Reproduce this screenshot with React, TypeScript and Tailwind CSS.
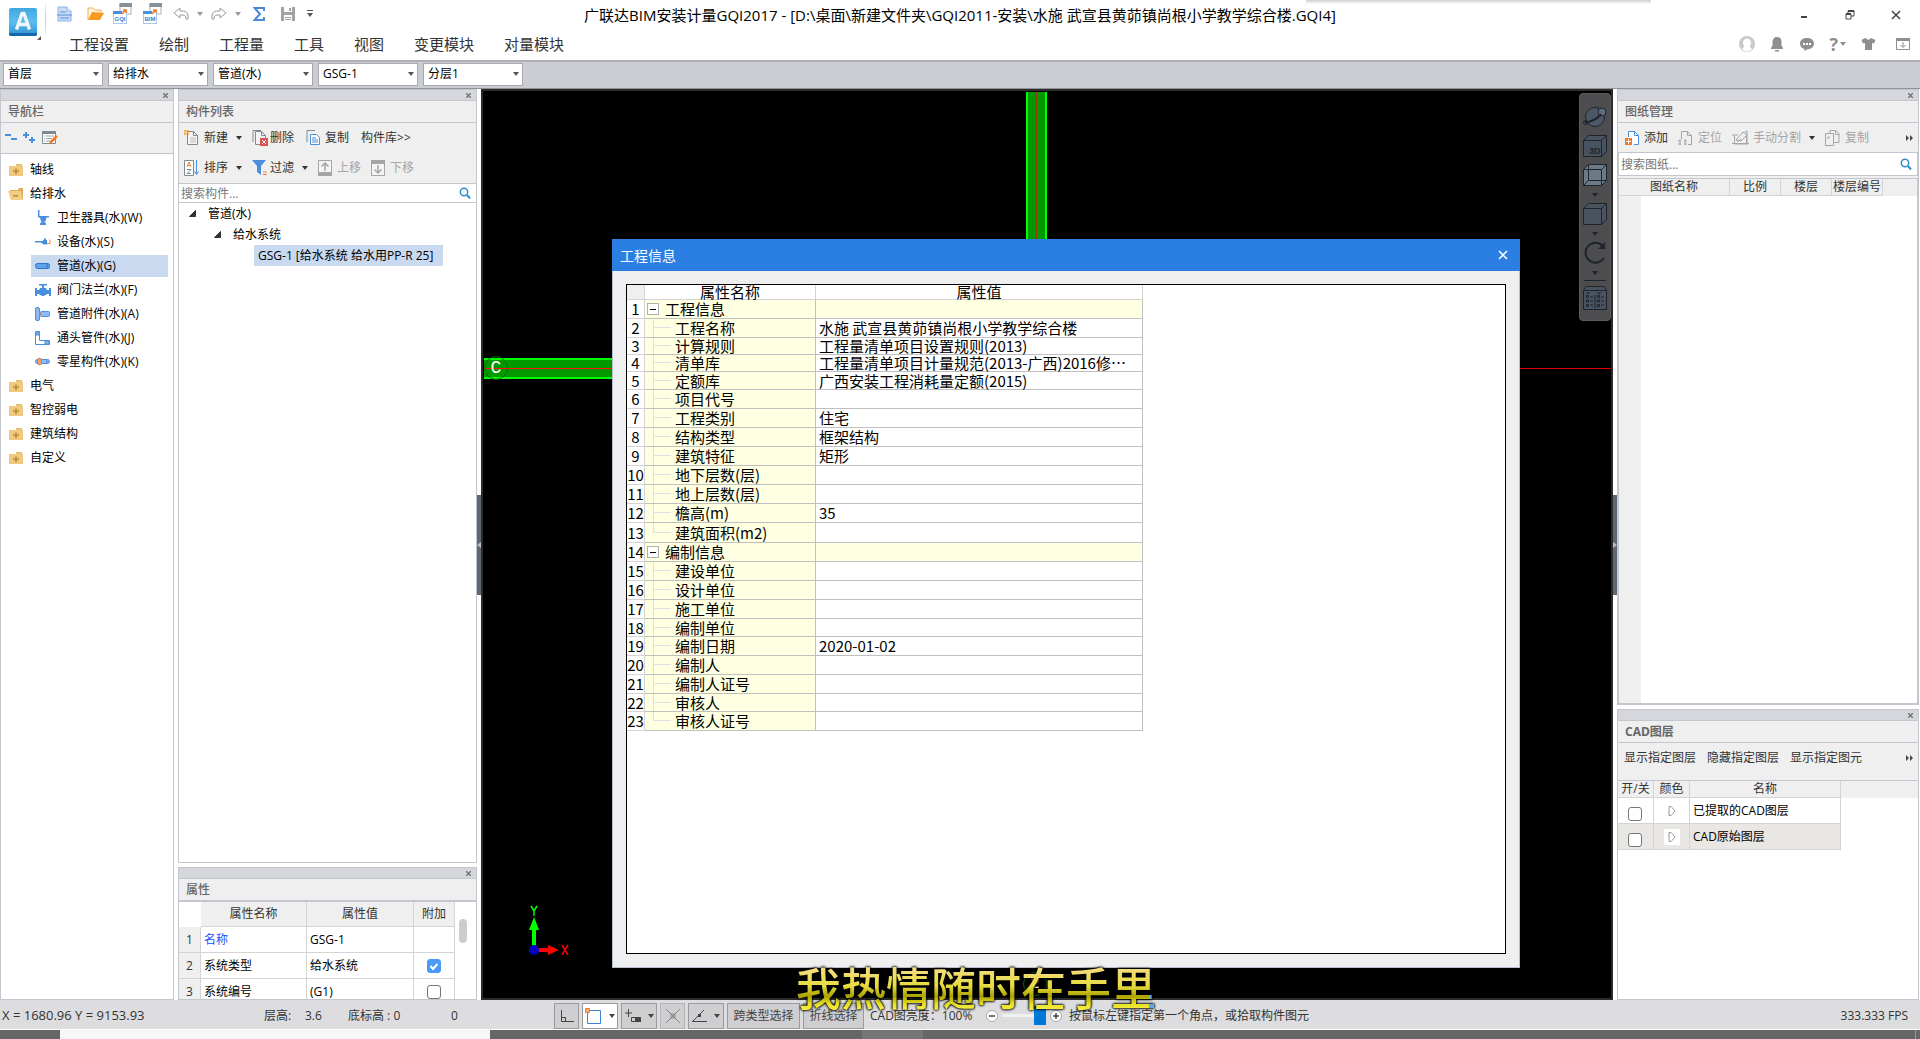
import { useState, type ReactNode } from "react";
import clsx from "clsx";

const menus = ["工程设置", "绘制", "工程量", "工具", "视图", "变更模块", "对量模块"];

const combos = [
  { label: "楼层", value: "首层" },
  { label: "专业", value: "给排水" },
  { label: "构件类型", value: "管道(水)" },
  { label: "构件", value: "GSG-1" },
  { label: "分层", value: "分层1" },
];

const navChildren = [
  { name: "卫生器具(水)(W)", icon: "toilet" },
  { name: "设备(水)(S)", icon: "tap" },
  { name: "管道(水)(G)", icon: "pipe" },
  { name: "阀门法兰(水)(F)", icon: "valve" },
  { name: "管道附件(水)(A)", icon: "fitting" },
  { name: "通头管件(水)(J)", icon: "elbow" },
  { name: "零星构件(水)(K)", icon: "misc" },
];

interface InfoRow {
  name: string;
  value?: string;
  group?: boolean;
  last?: boolean;
  height?: string;
}

const infoRows: InfoRow[] = [
  { name: "工程信息", group: true },
  { name: "工程名称", value: "水施 武宣县黄茆镇尚根小学教学综合楼" },
  { name: "计算规则", value: "工程量清单项目设置规则(2013)", height: "h-[17px]" },
  { name: "清单库", value: "工程量清单项目计量规范(2013-广西)2016修…", height: "h-[17px]" },
  { name: "定额库", value: "广西安装工程消耗量定额(2015)", height: "h-[18px]" },
  { name: "项目代号" },
  { name: "工程类别", value: "住宅" },
  { name: "结构类型", value: "框架结构" },
  { name: "建筑特征", value: "矩形" },
  { name: "地下层数(层)" },
  { name: "地上层数(层)" },
  { name: "檐高(m)", value: "35" },
  { name: "建筑面积(m2)", last: true, height: "h-5" },
  { name: "编制信息", group: true },
  { name: "建设单位" },
  { name: "设计单位" },
  { name: "施工单位" },
  { name: "编制单位", height: "h-[18px]" },
  { name: "编制日期", value: "2020-01-02" },
  { name: "编制人" },
  { name: "编制人证号" },
  { name: "审核人", height: "h-[18px]" },
  { name: "审核人证号", last: true },
];

function Caret({ className }: { className?: string }) {
  return (
    <svg width="6" height="4" viewBox="0 0 6 4" className={clsx("shrink-0", className)}>
      <path d="M0 0h6L3 4z" fill="currentColor" />
    </svg>
  );
}

function Svg({ w = 16, h = 16, children, className }: { w?: number; h?: number; children: ReactNode; className?: string }) {
  return (
    <svg width={w} height={h} viewBox={`0 0 ${w} ${h}`} fill="none" className={clsx("shrink-0", className)}>
      {children}
    </svg>
  );
}

function Logo() {
  return (
    <Svg w={32} h={32}>
      <defs>
        <linearGradient id="logo" x1="0" y1="0" x2="0" y2="1">
          <stop offset="0" stopColor="#3fa9e0" />
          <stop offset="0.5" stopColor="#5dbdf0" />
          <stop offset="1" stopColor="#2d8fd0" />
        </linearGradient>
      </defs>
      <rect width="28" height="28" rx="2" fill="url(#logo)" />
      <path d="M0 25h28v1a2 2 0 0 1-2 2H2a2 2 0 0 1-2-2z" fill="#1168ac" />
      <path d="M7.500 21.500 13 5.500h2L20.500 21.500M9.500 16.500h9" stroke="#f1f5f8" strokeWidth="3.400" strokeLinejoin="round" />
      <path d="M32 28v4h-4z" fill="#555" />
    </Svg>
  );
}

function WindowsIcon({ label }: { label: string }) {
  return (
    <Svg w={20} h={22}>
      <rect x="7" y="1" width="11" height="10" fill="#fff" stroke="#a9b0b6" />
      <path d="M6.500 0H19v4H6.500z" fill="#86929b" />
      <rect x="0.500" y="8.500" width="13" height="12" fill="#fff" stroke="#a8c8ee" />
      <path d="M0 8h9v3H0z" fill="#4a90e2" />
      <path d="m9 11 4-4M10 7h3v3" stroke="#f47b20" strokeWidth="1.500" />
      <text x="7" y="18" textAnchor="middle" fontSize="6" fontWeight="700" fill="#3d7fd0" fontFamily="Liberation Sans, sans-serif">
        {label}
      </text>
    </Svg>
  );
}

function QuickAccess() {
  return (
    <div className="flex h-7 items-center text-[#9a9a9a]">
      <button aria-label="新建工程">
        <Svg w={16} h={16}>
          <path d="M1 1h9l4 4v10H1z" fill="#c9dbf5" stroke="#8eb2e6" />
          <path d="M10 1v4h4" fill="#fff" stroke="#8eb2e6" />
          <path d="M0 9h15M3 6h6M3 12h9" stroke="#5a8fd8" />
        </Svg>
      </button>
      <button aria-label="打开" className="ml-3.5">
        <Svg w={18} h={16}>
          <path d="M1 14V2h5l2 2h6v3" stroke="#f0b055" fill="#fff3df" />
          <path d="m1 14 4-8 12 1-4 7z" fill="#f59a23" />
        </Svg>
      </button>
      <button aria-label="导入GQI" className="ml-2">
        <WindowsIcon label="GQI" />
      </button>
      <button aria-label="导入BIM" className="ml-2.5">
        <WindowsIcon label="BIM" />
      </button>
      <button aria-label="撤销" className="ml-2.5 flex items-center gap-2">
        <Svg w={16} h={14}>
          <path d="M1 6 7 1v3h3c3 0 5 2 5 5v3h-2c0-3-1-4-3-4H7v3z" stroke="#9a9a9a" />
        </Svg>
        <Caret />
      </button>
      <button aria-label="恢复" className="ml-2 flex items-center gap-2">
        <Svg w={16} h={14}>
          <path d="M15 6 9 1v3H6C3 4 1 6 1 9v3h2c0-3 1-4 3-4h3v3z" stroke="#9a9a9a" />
        </Svg>
        <Caret />
      </button>
      <button aria-label="汇总计算" className="ml-3">
        <Svg w={12} h={14}>
          <path d="M11 4V1H1.500L7 7l-5.500 6H11v-3" stroke="#4a8ad4" strokeWidth="2" />
        </Svg>
      </button>
      <button aria-label="保存" className="ml-4">
        <Svg w={14} h={14}>
          <path d="M0 0h14v14H0z" fill="#a2a2a2" />
          <path d="M3 0h8v5H3zM3 8h8v6H3z" fill="#fff" />
          <path d="M8 1h2v3H8zM4 10h6v1H4zM4 12h6v1H4z" fill="#a2a2a2" />
        </Svg>
      </button>
      <button aria-label="更多" className="ml-3 flex flex-col items-center gap-0.5 text-[#555]">
        <span className="h-px w-1.5 bg-[#555]" />
        <Caret />
      </button>
    </div>
  );
}

function Header() {
  return (
    <header className="relative flex h-[60px] shrink-0 bg-white">
      <div className="absolute top-0 left-[68%] right-[14%] h-1 bg-gradient-to-b from-[#cfcfcf] to-white" />
      <button aria-label="主菜单" className="mt-2 ml-[9px] h-8">
        <Logo />
      </button>
      <div className="ml-1 h-10 w-px bg-gradient-to-b from-white via-[#c8c8c8] to-white" />
      <div className="ml-[11px] flex flex-col">
        <QuickAccess />
        <nav className="mt-px ml-3 flex h-8 items-center gap-[30px] text-[15px] text-[#333]">
          {menus.map((name) => (
            <button key={name}>{name}</button>
          ))}
        </nav>
      </div>
      <h1 className="pointer-events-none absolute inset-x-0 top-[3px] text-center text-[15px] leading-6 whitespace-nowrap text-black">
        广联达BIM安装计量GQI2017 - [D:\桌面\新建文件夹\GQI2011-安装\水施 武宣县黄茆镇尚根小学教学综合楼.GQI4]
      </h1>
      <div className="ml-auto flex flex-col items-end">
        <div className="flex h-[30px] items-center gap-9 pr-[19px] text-[#444]">
          <button aria-label="最小化"><Svg w={10} h={10}><path d="M2 7h6" stroke="currentColor" strokeWidth="2" /></Svg></button>
          <button aria-label="还原">
            <Svg w={10} h={10}>
              <path d="M1 4h5v5H1zM3 4V1h6v5H6" stroke="currentColor" />
              <path d="M1 4h5M3 1h6" stroke="currentColor" strokeWidth="2" />
            </Svg>
          </button>
          <button aria-label="关闭"><Svg w={10} h={10}><path d="m1 1 8 8M9 1 1 9" stroke="currentColor" strokeWidth="1.500" /></Svg></button>
        </div>
        <div className="flex h-7 items-center gap-3.5 pr-2.5 text-[#8f8f8f]">
          <button aria-label="用户">
            <Svg>
              <circle cx="8" cy="8" r="8" fill="#c9c9c9" />
              <path d="M8 2.500c-2.500 0-4 1.800-4 4 0 1.800.6 3 1.500 3.800L3 13c1.500 1.500 3 2.500 5 2.500s3.500-1 5-2.500l-2.500-2.700C11.400 9.500 12 8.300 12 6.500c0-2.200-1.500-4-4-4z" fill="#fff" />
            </Svg>
          </button>
          <button aria-label="通知">
            <Svg>
              <path d="M8 1c3 0 4.500 2 4.500 5v3.500L14 12v1H2v-1l1.500-2.500V6C3.500 3 5 1 8 1zM6 14h4v1.500H6z" fill="currentColor" />
            </Svg>
          </button>
          <button aria-label="消息">
            <Svg>
              <path d="M8 2c4 0 7 2 7 5.500S12 13 9 13l-3.500 2v-2C3 12.500 1 10.500 1 7.500 1 4 4 2 8 2z" fill="currentColor" />
              <path d="M4 7h2v2H4zM7 7h2v2H7zM10 7h2v2h-2z" fill="#fff" />
            </Svg>
          </button>
          <button aria-label="帮助" className="flex items-center gap-0.5 text-lg font-bold">
            ?<Caret />
          </button>
          <button aria-label="皮肤">
            <Svg><path d="M5 2 1.500 4 3 7.500l2-.5v7h7V7l2 .5L15.500 4 11 2 8.500 4z" fill="currentColor" /></Svg>
          </button>
          <button aria-label="收起功能区" className="ml-1.5">
            <Svg w={14} h={14}>
              <path d="M.5 1.500h13v11H.5z" stroke="currentColor" />
              <path d="M0 1h14v3H0z" fill="currentColor" />
              <path d="M7 5v5M4.500 8 7 10.500 9.500 8" stroke="currentColor" />
            </Svg>
          </button>
        </div>
      </div>
    </header>
  );
}

function Combo({ label, value }: { label: string; value: string }) {
  return (
    <label className="relative block h-[23px] w-[100px]">
      <select
        aria-label={label}
        className="block h-full w-full appearance-none border border-[#a9a9ad] bg-white pb-0.5 pl-1 text-[12px] leading-[18px] text-black"
      >
        <option>{value}</option>
      </select>
      <Caret className="pointer-events-none absolute top-[9px] right-1 text-[#555]" />
    </label>
  );
}

function PanelHead({ title, bold }: { title: string; bold?: boolean }) {
  return (
    <>
      <div className="flex h-[11px] shrink-0 items-center justify-end border-b border-[#c3c6cd] bg-[#d5d7dc] pr-[5px]">
        <button aria-label={`关闭${title}`} className="text-[#777]">
          <Svg w={5} h={5}><path d="m0 0 5 5M5 0 0 5" stroke="currentColor" strokeWidth="1.500" /></Svg>
        </button>
      </div>
      <h2 className={clsx("h-[22px] shrink-0 border-b border-[#c3c6cd] bg-[#efefef] pl-[7px] text-[12px] leading-[21px] text-[#666]", bold ? "font-bold" : "font-medium")}>
        {title}
      </h2>
    </>
  );
}

function Folder({ open }: { open?: boolean }) {
  return (
    <Svg w={16} h={14}>
      {open ? (
        <>
          <path d="M2 3h8l1-2h4v12H3z" fill="#dcae55" />
          <path d="M0 4h13l2 9H3z" fill="#f2cd85" />
          <path d="M5 8h5v1.500H5z" fill="#b98a2e" />
        </>
      ) : (
        <>
          <path d="M8 1h6v2H8z" fill="#e4be74" />
          <path d="M1 3h14v10H1z" fill="#efc981" />
          <path d="M7.200 5.500h1.600v2h2v1.600h-2v2H7.200v-2h-2V7.500h2z" fill="#b98a2e" />
        </>
      )}
    </Svg>
  );
}

function NavIcon({ name }: { name: string }) {
  return (
    <Svg>
      {name === "toilet" && (
        <path d="M3 0h1.500v6H14v1.500h-2.500l-1 4H9l2 2V15H5v-1.500l2-2H6L5 7.500H3z" fill="#4a8ede" />
      )}
      {name === "tap" && (
        <>
          <path d="M0 7h8V6h1V4.500h2V6h1v4.500H8.500L6 8.500H0z" fill="#4a8ede" />
          <path d="M12 9.500h3V5.500" stroke="#ee8240" />
        </>
      )}
      {name === "pipe" && (
        <>
          <rect x="0.500" y="5.500" width="14" height="5" rx="2" fill="#5ba3ec" stroke="#2f74c8" />
          <path d="M12 6v4" stroke="#2f74c8" />
        </>
      )}
      {name === "valve" && (
        <path d="M4 2h8v1.500H9V6h2l1 2h2V6h2v8h-2v-2h-2l-1 1h-1l-1 1H7l-1-1H5l-1-1H2v2H0V6h2v2h2l1-2h2V3.500H4z" fill="#4a8ede" />
      )}
      {name === "fitting" && (
        <>
          <rect x="0.500" y="1.500" width="4" height="13" rx="1.500" fill="#8dbcf2" stroke="#4a8ede" />
          <rect x="5.500" y="5.500" width="9" height="5" rx="1" fill="#8dbcf2" stroke="#4a8ede" />
          <path d="M5 6v4" stroke="#ee8240" />
        </>
      )}
      {name === "elbow" && (
        <>
          <path d="M.5 1.500h4v9h10v4H.5z" fill="#fff" stroke="#4a8ede" />
          <path d="M1 2h3v3H1zM10 11h4v3h-4z" fill="#8dbcf2" stroke="#4a8ede" />
        </>
      )}
      {name === "misc" && (
        <>
          <rect x="0.500" y="5.500" width="14" height="4" rx="2" fill="#8dbcf2" stroke="#4a8ede" />
          <rect x="2.500" y="4.500" width="4" height="6" rx="1" fill="#f0a070" stroke="#e07840" />
          <path d="M12 6v4" stroke="#4a8ede" />
        </>
      )}
    </Svg>
  );
}

function NavPanel() {
  const [selected, setSelected] = useState("管道(水)(G)");

  const folder = (name: string, open?: boolean) => (
    <button key={name} className="flex h-6 items-center gap-1.5 pl-[7px] text-[12px]">
      <Folder open={open} />
      {name}
    </button>
  );

  return (
    <aside className="flex w-[174px] shrink-0 flex-col border border-[#c3c6cd] bg-white">
      <PanelHead title="导航栏" />
      <div className="flex h-[31px] shrink-0 items-center gap-1.5 border-b border-[#c3c6cd] bg-[#efefef] pl-1">
        <button aria-label="全部折叠">
          <Svg w={12} h={12}><path d="M0 3h6M6 7h6" stroke="#4a8ede" strokeWidth="2" /></Svg>
        </button>
        <button aria-label="全部展开">
          <Svg w={13} h={12}><path d="M0 3h6M3 0v6M6 8h6M9 5v6" stroke="#4a8ede" strokeWidth="2" /></Svg>
        </button>
        <button aria-label="编辑">
          <Svg w={16} h={14}>
            <path d="M.5.5h13v12H.5z" fill="#fff" stroke="#7f8b94" />
            <path d="M0 0h14v3H0z" fill="#7f8b94" />
            <path d="M2 5h1M4 5h8M2 7.500h1M4 7.500h6M2 10h1M4 10h4" stroke="#9aa4ab" />
            <path d="m8 12 7-7" stroke="#f47b20" strokeWidth="2.500" />
          </Svg>
        </button>
      </div>
      <div className="flex flex-col py-1">
        {folder("轴线")}
        {folder("给排水", true)}
        {navChildren.map((c) => (
          <button
            key={c.name}
            onClick={() => setSelected(c.name)}
            className={clsx(
              "my-px mr-[5px] ml-[30px] flex h-[22px] items-center gap-1.5 pl-1 text-[12px] whitespace-nowrap",
              selected === c.name && "bg-[#c8d9f0]",
            )}
          >
            <NavIcon name={c.icon} />
            {c.name}
          </button>
        ))}
        {["电气", "智控弱电", "建筑结构", "自定义"].map((n) => folder(n))}
      </div>
    </aside>
  );
}

function SearchBox({ placeholder, className }: { placeholder: string; className?: string }) {
  return (
    <label className={clsx("flex shrink-0 items-center bg-white pr-[5px] pl-0.5", className)}>
      <input
        aria-label={placeholder}
        placeholder={placeholder}
        className="min-w-0 flex-1 bg-transparent text-[12px] leading-[17px] outline-none placeholder:text-[#777]"
      />
      <Svg w={12} h={12}>
        <circle cx="5" cy="5" r="3.700" stroke="#2f8fc8" strokeWidth="1.500" />
        <path d="m8 8 3 3.500" stroke="#2f8fc8" strokeWidth="2" />
      </Svg>
    </label>
  );
}

const Page = ({ x = 0, color = "#7f8b94" }: { x?: number; color?: string }) => (
  <>
    <path d={`M${x + 0.5} 1.500h6l4 4v9h-10z`} fill="#f4f4f4" stroke={color} />
    <path d={`M${x + 6.5} 1.500v4h4`} stroke={color} />
  </>
);

function ComponentPanel() {
  return (
    <section className="flex min-h-0 flex-1 flex-col border border-[#c3c6cd] bg-white">
      <PanelHead title="构件列表" />
      <div className="shrink-0 border-b border-[#c3c6cd] bg-[#efefef] pl-[5px] text-[12px] text-[#333]">
        <div className="flex h-[30px] items-center">
          <button className="flex items-center gap-1">
            <Svg>
              <Page x={3} />
              <path d="M6 8h6M6 10h6M6 12h6" stroke="#c0c0c0" />
              <path d="M0 1h5M0 4h5M1 0v5M4 0v5" stroke="#f59a23" />
            </Svg>
            新建
          </button>
          <Caret className="ml-2" />
          <button className="ml-2.5 flex items-center gap-0.5">
            <Svg>
              <path d="M1 12V.5h8" stroke="#7f8b94" />
              <Page x={3} />
              <path d="M8 8h8v8H8z" fill="#d9534f" />
              <path d="m10 10 4 4M14 10l-4 4" stroke="#fff" />
            </Svg>
            删除
          </button>
          <button className="ml-3 flex items-center gap-1">
            <Svg w={15}>
              <path d="M1 12V.5h8" stroke="#7f8b94" />
              <path d="M4.500 4.500h6l3 3v7h-9z" fill="#fff" stroke="#4a8ede" />
              <path d="M6 8h4M6 10h6M6 12h6" stroke="#4a8ede" />
            </Svg>
            复制
          </button>
          <button className="ml-3">构件库&gt;&gt;</button>
        </div>
        <div className="flex h-[30px] items-center">
          <button className="flex items-center gap-1">
            <Svg>
              <path d="M.5.500h9v15h-9z" fill="#fff" stroke="#7f8b94" />
              <path d="m3 7 2-5 2 5M3.500 5.500h3" stroke="#ee8240" />
              <path d="M3 9.500h4L3 13.500h4" stroke="#7f8b94" />
              <path d="M12.500 0v14M10.500 11.500l2 3 2-3" stroke="#4a8ede" />
            </Svg>
            排序
          </button>
          <Caret className="ml-2" />
          <button className="ml-2.5 flex items-center gap-0.5">
            <Svg>
              <path d="M0 0h14L9 6v9l-4-3V6z" fill="#4a8ede" />
              <path d="M11 12h4M11 14.500h4" stroke="#ee8240" />
            </Svg>
            过滤
          </button>
          <Caret className="ml-2" />
          <button disabled className="ml-2.5 flex items-center gap-1 text-[#a5a5a5]">
            <Svg w={15}>
              <path d="M.5.500h13v14H.5z" fill="#f4f4f4" stroke="currentColor" />
              <path d="M0 12h14v4H0z" fill="currentColor" />
              <path d="M7 11V3M3.500 6.500 7 3l3.500 3.500" stroke="currentColor" strokeWidth="1.500" />
            </Svg>
            上移
          </button>
          <button disabled className="ml-2.5 flex items-center gap-1 text-[#a5a5a5]">
            <Svg w={15}>
              <path d="M.5.500h13v15H.5z" fill="#f4f4f4" stroke="currentColor" />
              <path d="M0 0h14v4H0z" fill="currentColor" />
              <path d="M7 5v8M3.500 9.500 7 13l3.500-3.500" stroke="currentColor" strokeWidth="1.500" />
            </Svg>
            下移
          </button>
        </div>
      </div>
      <SearchBox placeholder="搜索构件..." className="h-[19px] border-b border-[#c3c6cd]" />
      <ul className="text-[12px] leading-[21px] text-black">
        <li className="flex items-center gap-3 pl-2.5">
          <TreeArrow />
          管道(水)
        </li>
        <li className="flex items-center gap-3 pl-[35px]">
          <TreeArrow />
          给水系统
        </li>
        <li className="pl-[75px]">
          <span className="inline-block min-w-[189px] bg-[#c8d9f0] px-1 whitespace-nowrap">GSG-1 [给水系统 给水用PP-R 25]</span>
        </li>
      </ul>
    </section>
  );
}

const TreeArrow = () => (
  <Svg w={7} h={7}><path d="M6.500.5v6h-6z" fill="#333" stroke="#333" /></Svg>
);

function CheckBox({ label, defaultChecked }: { label: string; defaultChecked?: boolean }) {
  const [checked, setChecked] = useState(!!defaultChecked);
  return (
    <span className="relative inline-block h-3.5 w-3.5 align-middle">
      <input
        type="checkbox"
        aria-label={label}
        checked={checked}
        onChange={(e) => setChecked(e.target.checked)}
        className="block h-3.5 w-3.5 appearance-none rounded-[3px] border border-[#777] bg-white checked:border-[#4a9bf5] checked:bg-[#4a9bf5]"
      />
      {checked && (
        <Svg w={14} h={14} className="pointer-events-none absolute inset-0">
          <path d="m3.500 7 2.500 3 4.500-5" stroke="#fff" strokeWidth="2" />
        </Svg>
      )}
    </span>
  );
}

function PropertyPanel() {
  const cell = "border-r border-b border-[#d4d4d4]";
  const rows = [
    { name: "名称", value: "GSG-1" },
    { name: "系统类型", value: "给水系统", checked: true },
    { name: "系统编号", value: "(G1)", checked: false },
  ];
  return (
    <section className="flex h-[133px] shrink-0 flex-col overflow-hidden border border-[#c3c6cd] bg-white">
      <PanelHead title="属性" />
      <div className="flex items-start border-t border-[#c3c6cd]">
        <table className="w-[276px] table-fixed border-separate border-spacing-0 text-[12px] leading-[18px] text-black">
          <thead>
            <tr className="h-[25px] text-[#333]">
              <th className="w-[22px]" />
              <th className={clsx(cell, "w-[106px] bg-[#efefef] font-normal")}>属性名称</th>
              <th className={clsx(cell, "w-[107px] bg-[#efefef] font-normal")}>属性值</th>
              <th className={clsx(cell, "bg-[#efefef] font-normal")}>附加</th>
            </tr>
          </thead>
          <tbody>
            {rows.map((r, i) => (
              <tr key={r.name} className="h-[26px]">
                <td className={clsx(cell, "bg-[#efefef] text-center text-[#333]")}>{i + 1}</td>
                <td className={clsx(cell, "pl-[3px]", i === 0 && "text-[#1a50ff]")}>{r.name}</td>
                <td className={clsx(cell, "pl-[3px]")}>{r.value}</td>
                <td className={clsx(cell, "text-center leading-none")}>
                  {r.checked !== undefined && <CheckBox label={r.name} defaultChecked={r.checked} />}
                </td>
              </tr>
            ))}
          </tbody>
        </table>
        <div className="mt-[17px] ml-1 h-6 w-2 rounded-full bg-[#cdcdcd]" />
      </div>
    </section>
  );
}

function InfoDialog() {
  const line = "border-r border-b border-[#c0c0c0]";
  return (
    <div role="dialog" aria-label="工程信息" className="absolute top-[148px] right-[91px] bottom-[30px] left-[129px] flex flex-col border border-t-0 border-[#b8bfcc] bg-[#efefef]">
      <div className="-mx-px flex h-8 shrink-0 items-center justify-between bg-[#2b7fe3] pr-3 pl-2 text-white">
        <h2 className="text-[14px]">工程信息</h2>
        <button aria-label="关闭">
          <Svg w={10} h={10}><path d="m1 1 8 8M9 1 1 9" stroke="#fff" strokeWidth="1.500" /></Svg>
        </button>
      </div>
      <div className="m-[13px] flex-1 overflow-hidden border border-black bg-white">
        <table className="w-[516px] table-fixed border-separate border-spacing-0 font-['Noto_Sans_CJK_SC',sans-serif] text-[15px] leading-4 text-black">
          <thead>
            <tr className="h-[15px] leading-[14px]">
              <th className="w-[18px] border-r border-b border-[#d4d4d4] bg-[#efefef]" />
              <th className="w-[171px] border-r border-b border-[#d4d4d4] p-0 font-normal">属性名称</th>
              <th className="border-r border-b border-[#d4d4d4] p-0 font-normal">属性值</th>
            </tr>
          </thead>
          <tbody>
            {infoRows.map((r, i) => (
              <tr key={r.name + i} className={r.height ?? "h-[19px]"}>
                <td className="border-r border-b border-[#d4d4d4] p-0 text-center">{i + 1}</td>
                <td className={clsx(line, "h-px bg-[#ffffe1] p-0")}>
                  <div className="flex h-full items-center">
                    {r.group ? (
                      <button aria-label={`折叠${r.name}`} className="mr-1.5 ml-0.5 flex h-3 w-3 items-center justify-center border border-[#b0b0b0] bg-white">
                        <span className="h-px w-1.5 bg-black" />
                      </button>
                    ) : (
                      <span className="mr-1 ml-2 flex h-full w-[18px] flex-col border-[#e0e0e4]">
                        <span className="h-1/2 border-b border-l border-[#e0e0e4]" />
                        {!r.last && <span className="h-1/2 border-l border-[#e0e0e4]" />}
                      </span>
                    )}
                    {r.name}
                  </div>
                </td>
                <td className={clsx(line, "p-0 pl-[3px] whitespace-nowrap", r.group && "bg-[#ffffe1]")}>{r.value}</td>
              </tr>
            ))}
          </tbody>
        </table>
      </div>
    </div>
  );
}

function ViewTools() {
  const cube = "M.5 6.500h18v16H.5zM.5 6.500l5-5h18v16l-5 5M18.500 6.500l5-5";
  return (
    <div className="absolute top-0.5 right-0 flex w-8 flex-col items-center rounded-sm border border-[#5c5c5e] bg-[#4d4d4f] pt-[11px] pb-2.5 text-[#1e242c]">
      <button aria-label="动态观察">
        <Svg w={24} h={24}>
          <circle cx="12" cy="12" r="9.500" fill="#4c5868" stroke="currentColor" />
          <circle cx="19" cy="7" r="4" fill="#5f6b7a" stroke="currentColor" />
          <path d="M2 17c3 1 13-3 16-8" stroke="currentColor" strokeWidth="2" />
          <circle cx="2.500" cy="17.500" r="2" stroke="currentColor" />
        </Svg>
      </button>
      <button aria-label="三维" className="mt-[5px]">
        <Svg w={24} h={24}>
          <path d={cube} fill="#48535f" stroke="currentColor" />
          <text x="6" y="20" fontSize="9" fontWeight="700" fill="currentColor" fontFamily="Liberation Sans, sans-serif">3D</text>
        </Svg>
      </button>
      <button aria-label="线框" className="mt-[5px] flex flex-col items-center gap-1.5">
        <Svg w={24} h={24}>
          <path d={cube} fill="#6c7a88" stroke="currentColor" />
          <path d="M5.500 1.500v16h18M5.500 17.500l-5 5" stroke="currentColor" />
        </Svg>
        <Caret />
      </button>
      <button aria-label="视图" className="mt-[5px] flex flex-col items-center gap-1.5">
        <Svg w={24} h={24}><path d={cube} fill="#48535f" stroke="currentColor" /></Svg>
        <Caret />
      </button>
      <button aria-label="旋转" className="mt-[5px] flex flex-col items-center gap-1.5">
        <Svg w={24} h={24}>
          <path d="M20 5A10 10 0 1 0 21 17" stroke="currentColor" strokeWidth="2" />
          <path d="M22 1v7h-7z" fill="currentColor" />
        </Svg>
        <Caret />
      </button>
      <div className="my-[5px] h-px w-[22px] bg-[#1e242c]" />
      <button aria-label="显示设置">
        <Svg w={24} h={24}>
          <path d="M.5 4.500 3 .5h18l2.500 4v19H.5zM.5 4.500h23" fill="#48535f" stroke="currentColor" />
          <path d="M12 9v13M3.500 9.500h2v2h-2zM3.500 14h2v2h-2zM3.500 18.500h2v2h-2zM14.500 9.500h2v2h-2zM14.500 14h2v2h-2zM14.500 18.500h2v2h-2zM7 11h3M7 15h3M7 19h3M18 11h3M18 15h3M18 19h3M4 6l1 2 2-2M15 6l1 2 2-2" stroke="currentColor" />
        </Svg>
      </button>
    </div>
  );
}

function Axes() {
  return (
    <Svg w={44} h={50} className="absolute bottom-[43px] left-[42px]">
      <path d="M7 48V24h4v24z" fill="#0f0" />
      <path d="M9 12 4 25h10z" fill="#0f0" />
      <path d="M9 43h16v4H9z" fill="red" />
      <path d="M34 45 23 40v10z" fill="red" />
      <circle cx="9" cy="45" r="5" fill="#0000c0" />
      <path d="M6 1l3 5 3-5M9 6v5" stroke="#0f0" strokeWidth="1.500" />
      <path d="m37 40 6 10M43 40l-6 10" stroke="red" strokeWidth="1.500" />
    </Svg>
  );
}

function Canvas() {
  return (
    <main className="relative min-w-0 flex-1 overflow-hidden border-2 border-[#2b2b2b] bg-black">
      <div className="absolute top-px left-[543px] flex h-40 w-[21px] justify-center border-x-2 border-[#0f0] bg-[#009a00]">
        <span className="w-px bg-[#a03000]" />
      </div>
      <div className="absolute top-[277px] right-0 left-[200px] h-px bg-[#e00000]" />
      <div className="absolute top-[267px] left-px flex h-[21px] w-40 flex-col justify-center border-y-2 border-[#0f0] bg-[#009a00]">
        <span className="h-px bg-[#ff1010]" />
      </div>
      <div className="absolute top-[265px] left-px flex h-6 w-6 items-center justify-center rounded-full border border-[#007000] font-['Liberation_Mono',monospace] text-[18px] text-white">
        C
      </div>
      <div className="absolute bottom-0.5 left-[540px] flex h-6 w-6 items-center justify-center rounded-full border border-[#006a00] font-['Liberation_Mono',monospace] text-[16px] text-white">
        2
      </div>
      <Axes />
      <ViewTools />
      <InfoDialog />
    </main>
  );
}

function DrawingPanel() {
  const th = "border-r border-b border-[#d4d4d4] p-0 font-normal whitespace-nowrap";
  return (
    <section className="flex min-h-0 flex-1 flex-col border border-[#c3c6cd] bg-[#efefef]">
      <PanelHead title="图纸管理" />
      <div className="flex h-[29px] shrink-0 items-center pr-1 pl-[7px] text-[12px] text-[#333]">
        <button className="flex items-center gap-1">
          <Svg w={15}>
            <path d="M3.500 7V1.500h6l4 4v9H9" fill="#fff" stroke="#4a8ede" />
            <path d="M9.500 1.500v4h4" stroke="#4a8ede" />
            <path d="M0 8h7v7H0z" fill="#ee7a24" />
            <path d="M3.500 9v5M1 11.500h5" stroke="#fff" />
          </Svg>
          添加
        </button>
        <button disabled className="ml-2.5 flex items-center gap-1 text-[#a5a5a5]">
          <Svg>
            <path d="M3.500 9V1.500h6l4 4v9H10M9.500 1.500v4h4M0 11h3M6 11h3M0 14h3M6 14h3M2 9v6M7 9v6" stroke="currentColor" />
          </Svg>
          定位
        </button>
        <button disabled className="ml-2.5 flex items-center gap-1 text-[#a5a5a5]">
          <Svg w={17}>
            <path d="M2.500 5v9h12V5M0 5h6M0 13.500h17M4 10l7-8 4 3-6 6zM5 12l4-3M13 2l2-1v14" stroke="currentColor" />
          </Svg>
          手动分割
        </button>
        <Caret className="ml-2" />
        <button disabled className="ml-2.5 flex items-center gap-1 text-[#a5a5a5]">
          <Svg>
            <path d="M.5 3.500h8v12h-8zM5 3V.5h6l3 3v9H9M10.500.5v4H14M3 7h2M3 7v2" stroke="currentColor" />
          </Svg>
          复制
        </button>
        <MoreArrow />
      </div>
      <SearchBox placeholder="搜索图纸..." className="h-6 border border-[#c3c6cd]" />
      <div className="mt-0.5 flex min-h-0 flex-1 flex-col border border-[#c3c6cd] bg-white">
        <div className="bg-[#efefef]">
          <table className="w-[264px] table-fixed border-separate border-spacing-0 text-[12px] leading-4 text-[#333]">
            <thead>
              <tr className="h-[17px]">
                <th className={clsx(th, "w-[111px]")}>图纸名称</th>
                <th className={th}>比例</th>
                <th className={th}>楼层</th>
                <th className={th}>楼层编号</th>
              </tr>
            </thead>
          </table>
        </div>
        <div className="w-[22px] flex-1 bg-[#efefef]" />
      </div>
    </section>
  );
}

const MoreArrow = () => (
  <button aria-label="更多" className="ml-auto flex h-[18px] items-center">
    <Svg w={8} h={6}><path d="M0 0v6l3-3zM4 0v6l3-3z" fill="#444" /></Svg>
  </button>
);

function LayerPanel() {
  const cell = "border-r border-b border-[#d4d4d4] p-0";
  return (
    <section className="flex h-[291px] shrink-0 flex-col border border-[#c3c6cd] bg-white">
      <PanelHead title="CAD图层" bold />
      <div className="flex h-[37px] shrink-0 items-start gap-[11px] bg-[#efefef] pt-1.5 pr-1 pl-1.5 text-[12px] leading-[18px] text-[#333]">
        <button>显示指定图层</button>
        <button>隐藏指定图层</button>
        <button>显示指定图元</button>
        <MoreArrow />
      </div>
      <div className="border-t border-[#c3c6cd] bg-[linear-gradient(#efefef_17px,white_17px)]">
        <table className="w-[223px] table-fixed border-separate border-spacing-0 text-[12px] leading-4 text-black">
          <thead>
            <tr className="h-[17px] text-[#333]">
              <th className={clsx(cell, "w-9 font-normal")}>开/关</th>
              <th className={clsx(cell, "w-9 font-normal")}>颜色</th>
              <th className={clsx(cell, "font-normal")}>名称</th>
            </tr>
          </thead>
          <tbody>
            {["已提取的CAD图层", "CAD原始图层"].map((name, i) => (
              <tr key={name} className={clsx("h-[26px]", i === 1 && "bg-[#e8e7e3]")}>
                <td className={clsx(cell, "pt-1.5 pr-0.5 text-center leading-none")}>
                  <CheckBox label={name} />
                </td>
                <td className={cell}>
                  <span className="mx-auto flex h-4 w-4 items-center justify-center bg-white">
                    <Svg w={8} h={10}><path d="M1 .5h2l4 4.500-4 4.500H1z" stroke="#999" /></Svg>
                  </span>
                </td>
                <td className={clsx(cell, "pl-[3px]")}>{name}</td>
              </tr>
            ))}
          </tbody>
        </table>
      </div>
    </section>
  );
}

function SplitHandle({ flip }: { flip?: boolean }) {
  return (
    <div className="flex w-1 shrink-0 flex-col bg-white pt-[406px]">
      <button aria-label="折叠面板" className="flex h-[100px] w-1 items-center bg-[#5d6872]">
        <svg width="4" height="6" viewBox="0 0 4 6" className={flip ? "rotate-180" : ""}>
          <path d="M4 0v6L0 3z" fill="#b9bfc4" />
        </svg>
      </button>
    </div>
  );
}

function StatusBar() {
  const btn = "flex h-[26px] shrink-0 items-center justify-center border border-[#9a9a9e] bg-[#cfcfd2]";
  return (
    <footer className="flex h-[29px] shrink-0 items-center bg-[#dddddf] pt-0.5 text-[12px] whitespace-nowrap text-[#333]">
      <span className="w-[262px] pl-0.5 text-[13px]">X = 1680.96 Y = 9153.93</span>
      <span className="ml-0.5 w-[41px]">层高:</span>
      <span className="w-[43px]">3.6</span>
      <span className="w-[103px]">底标高 : 0</span>
      <span className="w-[103px]">0</span>
      <div className="mt-px flex gap-[3px] self-start text-[#444]">
        <button aria-label="正交" className={clsx(btn, "w-[25px]")}>
          <Svg w={14} h={14}><path d="M1.500 1v11.500H14M2 8.500h3.500v4" stroke="currentColor" /></Svg>
        </button>
        <button aria-label="矩形选择" className={clsx(btn, "w-9 gap-2 border-[#2f8fef] bg-white")}>
          <Svg w={16} h={16}>
            <path d="M2.500 2.500h13v13h-13z" stroke="#3b82d8" />
            <path d="M.5.500h4v4h-4z" fill="#f8b080" stroke="#ee7a24" />
          </Svg>
          <Caret />
        </button>
        <button aria-label="偏移" className={clsx(btn, "w-9 gap-1.5")}>
          <Svg w={17} h={14}>
            <path d="M0 4h7M3.500 0v8" stroke="currentColor" />
            <path d="M6.500 8.500h9v4h-9z" stroke="currentColor" />
            <path d="M10 9h6v4h-6z" fill="currentColor" />
          </Svg>
          <Caret />
        </button>
        <button aria-label="交点" disabled className={clsx(btn, "w-[25px] border-[#b5b5b8] text-[#888]")}>
          <Svg><path d="m1 1 14 14M15 1 1 15M6 6h4v4H6z" stroke="currentColor" /></Svg>
        </button>
        <button aria-label="垂足" className={clsx(btn, "w-9 gap-1.5")}>
          <Svg w={16} h={14}>
            <path d="M0 12.500h15M1 12 12 1" stroke="currentColor" />
            <path d="M6 5h3v3H6z" fill="currentColor" />
          </Svg>
          <Caret />
        </button>
        <button className={clsx(btn, "w-[73px]")}>跨类型选择</button>
        <button className={clsx(btn, "w-[61px]")}>折线选择</button>
      </div>
      <span className="ml-1.5 w-[116px]">CAD图亮度：100%</span>
      <button aria-label="减小亮度">
        <Svg w={12} h={12}><circle cx="6" cy="6" r="5.500" fill="#fff" stroke="#aaa" /><path d="M3 6h6" stroke="#444" strokeWidth="1.500" /></Svg>
      </button>
      <input
        type="range"
        aria-label="CAD图亮度"
        defaultValue={100}
        className="relative z-10 mx-1 h-[19px] w-11 appearance-none bg-[linear-gradient(transparent_8px,#f0f0f0_8px,#f0f0f0_11px,transparent_11px)] [&::-webkit-slider-thumb]:h-[19px] [&::-webkit-slider-thumb]:w-3 [&::-webkit-slider-thumb]:appearance-none [&::-webkit-slider-thumb]:bg-[#0078d7]"
      />
      <button aria-label="增大亮度">
        <Svg w={12} h={12}><circle cx="6" cy="6" r="5.500" fill="#fff" stroke="#aaa" /><path d="M3 6h6M6 3v6" stroke="#444" strokeWidth="1.500" /></Svg>
      </button>
      <span className="ml-[7px]">按鼠标左键指定第一个角点，或拾取构件图元</span>
      <span className="ml-auto pr-3">333.333 FPS</span>
    </footer>
  );
}

export default function App() {
  return (
    <div className="relative flex h-screen w-full flex-col overflow-hidden bg-white font-['Open_Sans','Noto_Sans_CJK_SC',sans-serif]">
      <Header />
      <div className="flex h-[29px] shrink-0 items-start gap-[5px] border-t-2 border-b border-t-[#b0b0b4] border-b-[#8f9299] bg-[#cacdd2] px-[3px] pt-px">
        {combos.map((c) => (
          <Combo key={c.label} {...c} />
        ))}
      </div>
      <div className="flex min-h-0 flex-1">
        <NavPanel />
        <div className="ml-1 flex w-[299px] shrink-0 flex-col gap-1">
          <ComponentPanel />
          <PropertyPanel />
        </div>
        <SplitHandle />
        <Canvas />
        <SplitHandle flip />
        <div className="flex w-[302px] shrink-0 flex-col gap-1">
          <DrawingPanel />
          <LayerPanel />
        </div>
        <div className="w-px shrink-0" />
      </div>
      <StatusBar />
      <div className="flex h-2.5 shrink-0 items-stretch border-t border-white bg-[#666]">
        <div className="ml-[60px] w-[430px] bg-[#f7f7f7]" />
        <div className="ml-[372px] w-[61px] bg-[#757575]" />
        <div className="ml-auto mr-[85px] h-full overflow-hidden pt-1 text-[13px] leading-[18px] text-white">18:58</div>
        <div className="mr-1 w-px bg-[#999]" />
      </div>
      <p className="pointer-events-none absolute bottom-5 left-[796px] z-20 bg-[linear-gradient(to_right,transparent_98%,#5aa9ee_98%),linear-gradient(#f3dc80_15%,#e8dc40_45%,#aaa200_62%,#e8e020_75%,#fff45c_90%)] bg-clip-text text-[45px] leading-[60px] font-medium whitespace-nowrap text-transparent [filter:drop-shadow(0_0_1px_#000)_drop-shadow(0_0_1px_#000)]">
        我热情随时在手里
      </p>
    </div>
  );
}
